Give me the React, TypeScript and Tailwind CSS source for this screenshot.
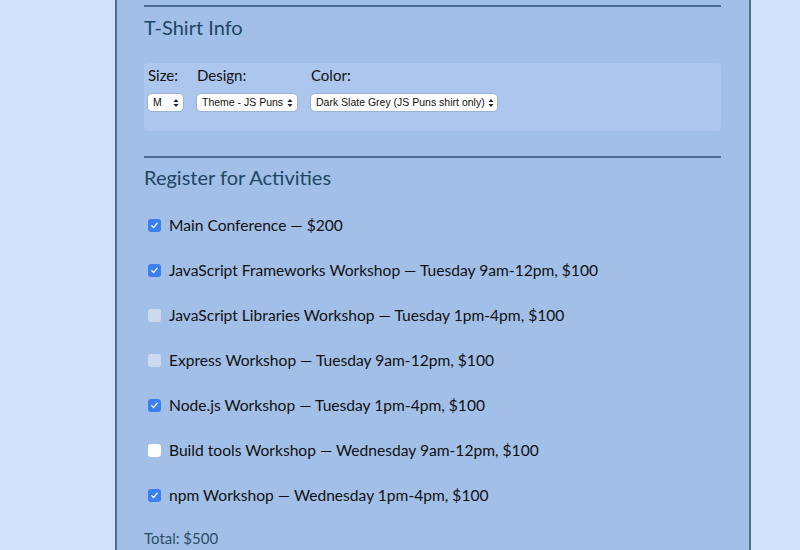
import React from "react";

const activities = [
  { label: "Main Conference — $200", state: "checked" },
  { label: "JavaScript Frameworks Workshop — Tuesday 9am-12pm, $100", state: "checked" },
  { label: "JavaScript Libraries Workshop — Tuesday 1pm-4pm, $100", state: "disabled" },
  { label: "Express Workshop — Tuesday 9am-12pm, $100", state: "disabled" },
  { label: "Node.js Workshop — Tuesday 1pm-4pm, $100", state: "checked" },
  { label: "Build tools Workshop — Wednesday 9am-12pm, $100", state: "empty" },
  { label: "npm Workshop — Wednesday 1pm-4pm, $100", state: "checked" },
];

function Box({ state }: { state: string }) {
  if (state === "checked") {
    return (
      <span className="flex h-[13px] w-[13px] items-center justify-center rounded-[3px] bg-[#3c7ff0]">
        <svg width="9" height="9" viewBox="0 0 9 9">
          <path d="M1.8 4.8 L3.6 6.6 L7.2 2.2" fill="none" stroke="white" strokeWidth="1.3" strokeLinecap="round" strokeLinejoin="round" />
        </svg>
      </span>
    );
  }
  if (state === "disabled") {
    return <span className="h-[13px] w-[13px] rounded-[3px] bg-[#cdd9ef]" />;
  }
  return <span className="h-[13px] w-[13px] rounded-[3px] bg-white" />;
}

function Select({ text, w }: { text: string; w: string }) {
  return (
    <div
      className={`flex h-[17px] items-center justify-between whitespace-nowrap rounded-[4px] bg-white pl-[5px] pr-[4px] text-[10.5px] text-[#111] shadow-[0_0_0_0.5px_#8a9bb5] ${w}`}
      style={{ fontFamily: '"Liberation Sans", Arial, sans-serif' }}
    >
      <span>{text}</span>
      <svg width="6" height="10" viewBox="0 0 6 10" className="ml-[3px] shrink-0">
        <path d="M0.5 4 L3 1 L5.5 4 Z" fill="#222" />
        <path d="M0.5 6 L3 9 L5.5 6 Z" fill="#222" />
      </svg>
    </div>
  );
}

export default function App() {
  return (
    <div
      className="flex h-[550px] w-[800px] overflow-hidden bg-[#d0e1f9]"
      style={{ fontFamily: 'Lato, "Noto Sans", sans-serif' }}
    >
      <div className="ml-[115px] flex h-[600px] w-[636px] border-x-2 border-[#4d6d90] bg-[#a2bfe8]">
        <div className="ml-[27px] w-[577px] pt-[5px]">
          <div className="h-[2px] bg-[#4d6d90]" />
          <h2 className="mt-[8px] text-[20px] leading-[24px] text-[#1c4864]">T-Shirt Info</h2>
          <div className="mt-[24px] h-[68px] rounded-[4px] bg-[#acc6ee] pl-[4px] pt-[2px]">
            <div className="flex gap-[14px]">
              <div className="flex flex-col">
                <span className="text-[15px] leading-[20px] text-[#111]">Size:</span>
                <div className="mt-[9px]">
                  <Select text="M" w="w-[35px]" />
                </div>
              </div>
              <div className="flex flex-col">
                <span className="text-[15px] leading-[20px] text-[#111]">Design:</span>
                <div className="mt-[9px]">
                  <Select text="Theme - JS Puns" w="w-[100px]" />
                </div>
              </div>
              <div className="flex flex-col">
                <span className="text-[15px] leading-[20px] text-[#111]">Color:</span>
                <div className="mt-[9px]">
                  <Select text="Dark Slate Grey (JS Puns shirt only)" w="w-[186px]" />
                </div>
              </div>
            </div>
          </div>
          <div className="mt-[25px] h-[2px] bg-[#4d6d90]" />
          <h2 className="mt-[7px] text-[20px] leading-[24px] text-[#1c4864]">Register for Activities</h2>
          <div className="mt-[14px] flex flex-col">
            {activities.map((a) => (
              <div key={a.label} className="flex h-[45px] items-center gap-[8px] pl-[4px]">
                <Box state={a.state} />
                <span className="text-[15.6px] text-[#111]">{a.label}</span>
              </div>
            ))}
          </div>
          <div className="mt-[9px] text-[15px] text-[#2b4d69]">Total: $500</div>
        </div>
      </div>
    </div>
  );
}
